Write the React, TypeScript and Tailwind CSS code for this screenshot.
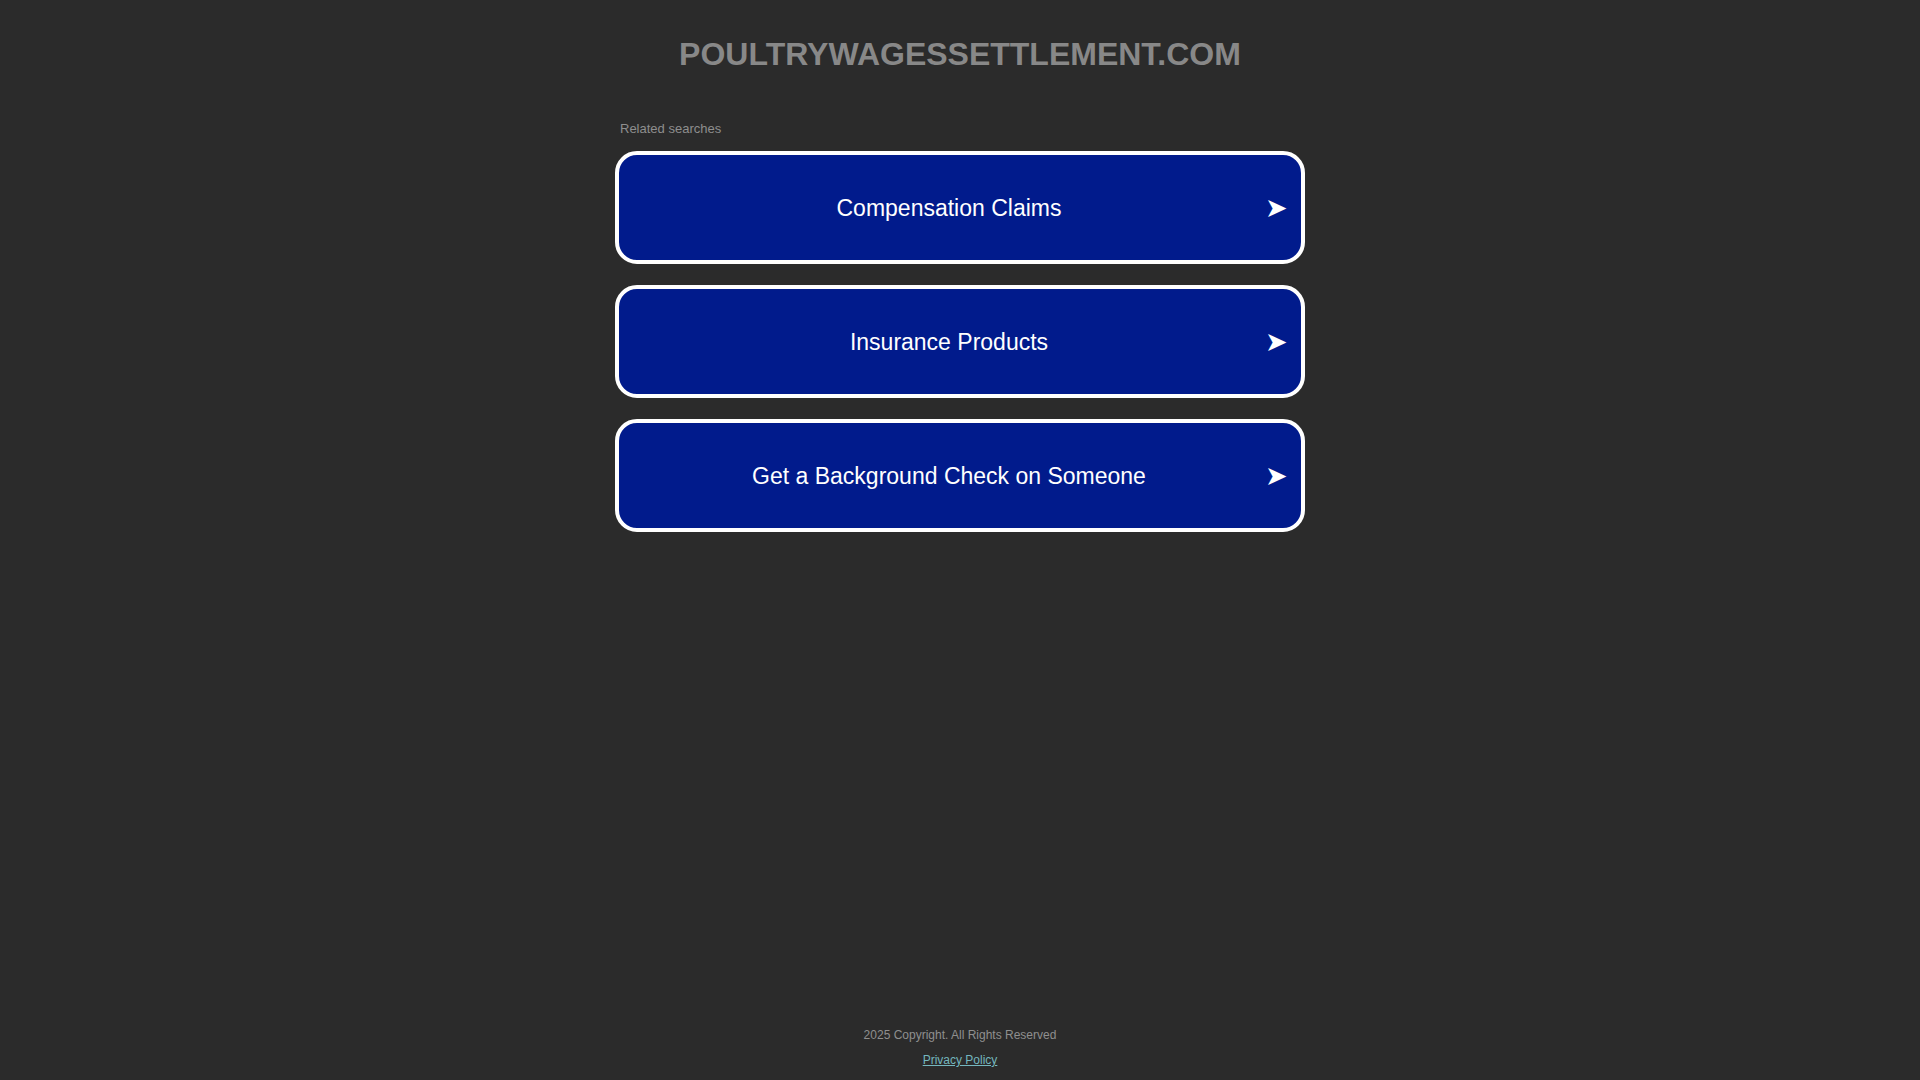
const searches = ['Compensation Claims', 'Insurance Products', 'Get a Background Check on Someone'];

export default function App() {
  return (
    <div className="flex min-h-screen flex-col bg-[#2b2b2b] font-['Liberation_Sans',Arial,sans-serif]">
      <header className="pt-[34px] text-center">
        <h1 className="text-[32px] font-bold leading-[40px] text-[#888888]">POULTRYWAGESSETTLEMENT.COM</h1>
      </header>

      <main className="mx-auto mt-[47px] w-[690px]">
        <p className="px-[5px] text-[13px] leading-[16px] text-[#8e8e8e]">Related searches</p>
        <ul className="mt-[14px] flex flex-col gap-[21px]">
          {searches.map((label) => (
            <li key={label}>
              <a
                href="#"
                className="flex h-[113px] items-center rounded-[22px] border-4 border-white bg-[#011b8c] pl-4 pr-[12px] text-white"
              >
                <span className="flex-1 text-center text-[23px] leading-[28px]">{label}</span>
                <span className="w-[26px] text-center text-[27px] leading-[28px]">➤</span>
              </a>
            </li>
          ))}
        </ul>
      </main>

      <footer className="mt-auto pb-[12px] text-center text-[12px] leading-[16px]">
        <p className="text-[#8f8f8f]">2025 Copyright. All Rights Reserved</p>
        <a href="#" className="mt-[9px] inline-block text-[#74b7bf] underline">
          Privacy Policy
        </a>
      </footer>
    </div>
  );
}
